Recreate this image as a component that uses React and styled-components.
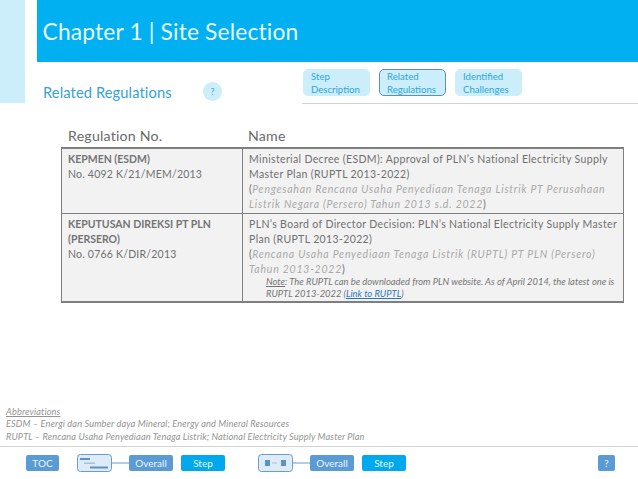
import React from "react";
import styled, { createGlobalStyle } from "styled-components";

const Global = createGlobalStyle`
  html, body { margin: 0; padding: 0; background: #fff; }
  body { font-family: Lato, "Open Sans", sans-serif; }
`;
const Page = styled.div`
  width: 638px; height: 479px; display: flex; flex-direction: column; overflow: hidden; background: #fff;
`;
const Top = styled.div`
  display: flex; height: 104px; flex: none;
`;
const Sidebar = styled.div`
  width: 25px; height: 103px; background: #cceefb; flex: none;
`;
const TopMain = styled.div`
  margin-left: 12px; flex: 1; display: flex; flex-direction: column;
`;
const Banner = styled.div`
  height: 62px; background: #00b0f0; color: #e8f8fe; display: flex; align-items: center;
  padding-left: 5.5px; font-size: 22.8px; letter-spacing: 0.15px;
`;
const SubRow = styled.div`
  flex: 1; display: flex;
`;
const Section = styled.div`
  width: 265px; flex: none; display: flex; align-items: center; padding: 18px 0 1px 6px; box-sizing: border-box;
`;
const SectionTitle = styled.div`
  width: 160px; font-size: 14.7px; color: #35a3d9; letter-spacing: 0.1px;
`;
const HelpDot = styled.div`
  width: 19px; height: 19px; border-radius: 50%; background: #cceefb; color: #36a8dc;
  font-size: 9px; display: flex; align-items: center; justify-content: center;
`;
const Tabs = styled.div`
  flex: 1; display: flex; gap: 9px; padding: 7px 0 0 1px; border-bottom: 1px solid #d4d4d4; box-sizing: border-box; align-items: flex-start; height: 42px;
`;
const Tab = styled.div`
  width: 67px; height: 27px; box-sizing: border-box; border-radius: 5px; background: #cceefb;
  border: 1px solid ${p => (p.$active ? "#5b8fc0" : "#cceefb")};
  color: #2ea6d8; font-size: 9.6px; line-height: 13px; padding: 0 0 0 7px;
`;
const HeadRow = styled.div`
  display: grid; grid-template-columns: 181px 1fr; margin: 20px 14px 0 61px; height: 23px; padding-bottom: 1px; box-sizing: border-box; align-items: center;
  color: #6a6a6a; font-size: 14.2px; letter-spacing: 0.2px;
`;
const HeadCell = styled.div`
  padding-left: ${p => p.$pad}px;
`;
const Table = styled.div`
  margin: 0 14px 0 61px; border-top: 2px solid #7f7f7f; border-bottom: 2px solid #7f7f7f;
  border-left: 1px solid #7f7f7f; border-right: 1px solid #7f7f7f; background: #f2f2f2;
`;
const Row = styled.div`
  display: grid; grid-template-columns: 180px 1fr; height: ${p => p.$h}px;
  & + & { border-top: 1px solid #7f7f7f; }
`;
const Cell = styled.div`
  padding: 3px 0 0 6px; font-size: 10.5px; line-height: 15px; color: #707070; letter-spacing: ${p => p.$ls}px;
  & + & { border-left: 1px solid #7f7f7f; }
`;
const Code = styled.strong`
  font-weight: 700; color: #747474; display: block; letter-spacing: 0;
`;
const Indo = styled.em`
  color: #a9a9a9; font-style: italic; letter-spacing: 0.77px;
`;
const Line = styled.div`
  white-space: nowrap;
`;
const Note = styled.div`
  margin-left: 17px; margin-top: -1px; font-size: 9.4px; line-height: 11.5px; font-style: italic; color: #757575; letter-spacing: 0;
`;
const Under = styled.span`
  text-decoration: underline;
`;
const RuptLink = styled.a`
  color: #2a78bb; text-decoration: underline;
`;
const Abbrev = styled.div`
  margin-top: auto; padding-left: 6px; font-size: 9.2px; line-height: 12.5px; font-style: italic; color: #949494; letter-spacing: 0.13px;
`;
const Footer = styled.div`
  height: 33px; margin-top: 3px; flex: none; border-top: 1px solid #d4d4d4; display: flex; align-items: flex-start; padding-top: 8px; box-sizing: border-box;
`;
const NavBtn = styled.div`
  height: 16px; width: ${p => p.$w}px; margin-left: ${p => p.$ml || 0}px; flex: none; border-radius: 2px;
  background: ${p => (p.$bright ? "#00a9ee" : "#5b9bd5")}; color: #e8f5fc; font-size: 10px;
  display: flex; align-items: center; justify-content: center;
`;
const Spacer = styled.div`
  flex: 1;
`;
const EndGap = styled.div`
  flex: none; width: 23px;
`;
const MapIcon = styled.svg`
  flex: none; display: block; margin-left: ${p => p.$ml}px; margin-top: -1px;
`;

const Gantt = ({ ml }) => (
  <MapIcon $ml={ml} width="52" height="18" viewBox="0 0 52 18">
    <rect x="0.5" y="0.5" width="34" height="17" rx="3" fill="#deebf9" stroke="#6b9ccb" />
    <rect x="3" y="4" width="10" height="2" fill="#5f92c4" />
    <rect x="7" y="8.5" width="11" height="1.5" fill="#a8c0d8" />
    <rect x="13" y="12.5" width="18" height="2" fill="#5f92c4" />
    <line x1="35" y1="9" x2="52" y2="9" stroke="#6b9ccb" />
  </MapIcon>
);
const Steps = ({ ml }) => (
  <MapIcon $ml={ml} width="52" height="18" viewBox="0 0 52 18">
    <rect x="0.5" y="0.5" width="34" height="17" rx="3" fill="#deebf9" stroke="#6b9ccb" />
    <rect x="7" y="6" width="5" height="6" fill="#5f92c4" />
    <rect x="14" y="8.5" width="5" height="1" fill="#a8c0d8" />
    <rect x="23" y="6" width="5" height="6" fill="#5f92c4" />
    <line x1="35" y1="9" x2="52" y2="9" stroke="#6b9ccb" />
  </MapIcon>
);

export default function App() {
  return (
    <Page>
      <Global />
      <Top>
        <Sidebar />
        <TopMain>
          <Banner>Chapter 1 | Site Selection</Banner>
          <SubRow>
            <Section>
              <SectionTitle>Related Regulations</SectionTitle>
              <HelpDot>?</HelpDot>
            </Section>
            <Tabs>
              <Tab>Step<br />Description</Tab>
              <Tab $active>Related<br />Regulations</Tab>
              <Tab>Identified<br />Challenges</Tab>
            </Tabs>
          </SubRow>
        </TopMain>
      </Top>
      <HeadRow>
        <HeadCell $pad={7}>Regulation No.</HeadCell>
        <HeadCell $pad={6}>Name</HeadCell>
      </HeadRow>
      <Table>
        <Row $h={64}>
          <Cell $ls={0.22}>
            <Code>KEPMEN (ESDM)</Code>
            No. 4092 K/21/MEM/2013
          </Cell>
          <Cell $ls={0.36}>
            <Line>Ministerial Decree (ESDM): Approval of PLN’s National Electricity Supply</Line>
            <Line>Master Plan (RUPTL 2013-2022)</Line>
            <Line>(<Indo>Pengesahan Rencana Usaha Penyediaan Tenaga Listrik PT Perusahaan</Indo></Line>
            <Line><Indo>Listrik Negara (Persero) Tahun 2013 s.d. 2022</Indo>)</Line>
          </Cell>
        </Row>
        <Row $h={87}>
          <Cell $ls={0.22}>
            <Code>KEPUTUSAN DIREKSI PT PLN</Code>
            <Code>(PERSERO)</Code>
            No. 0766 K/DIR/2013
          </Cell>
          <Cell $ls={0.36}>
            <Line>PLN’s Board of Director Decision: PLN’s National Electricity Supply Master</Line>
            <Line>Plan (RUPTL 2013-2022)</Line>
            <Line>(<Indo>Rencana Usaha Penyediaan Tenaga Listrik (RUPTL) PT PLN (Persero)</Indo></Line>
            <Line><Indo>Tahun 2013-2022</Indo>)</Line>
            <Note>
              <Line><Under>Note</Under>: The RUPTL can be downloaded from PLN website. As of April 2014, the latest one is</Line>
              <Line>RUPTL 2013-2022 (<RuptLink>Link to RUPTL</RuptLink>)</Line>
            </Note>
          </Cell>
        </Row>
      </Table>
      <Abbrev>
        <Under>Abbreviations</Under>
        <Line>ESDM – Energi dan Sumber daya Mineral; Energy and Mineral Resources</Line>
        <Line>RUPTL – Rencana Usaha Penyediaan Tenaga Listrik; National Electricity Supply Master Plan</Line>
      </Abbrev>
      <Footer>
        <NavBtn $w={33} $ml={26}>TOC</NavBtn>
        <Gantt ml={18} />
        <NavBtn $w={44}>Overall</NavBtn>
        <NavBtn $w={44} $ml={8} $bright>Step</NavBtn>
        <Steps ml={33} />
        <NavBtn $w={44}>Overall</NavBtn>
        <NavBtn $w={44} $ml={8} $bright>Step</NavBtn>
        <Spacer />
        <NavBtn $w={17}>?</NavBtn>
        <EndGap />
      </Footer>
    </Page>
  );
}
